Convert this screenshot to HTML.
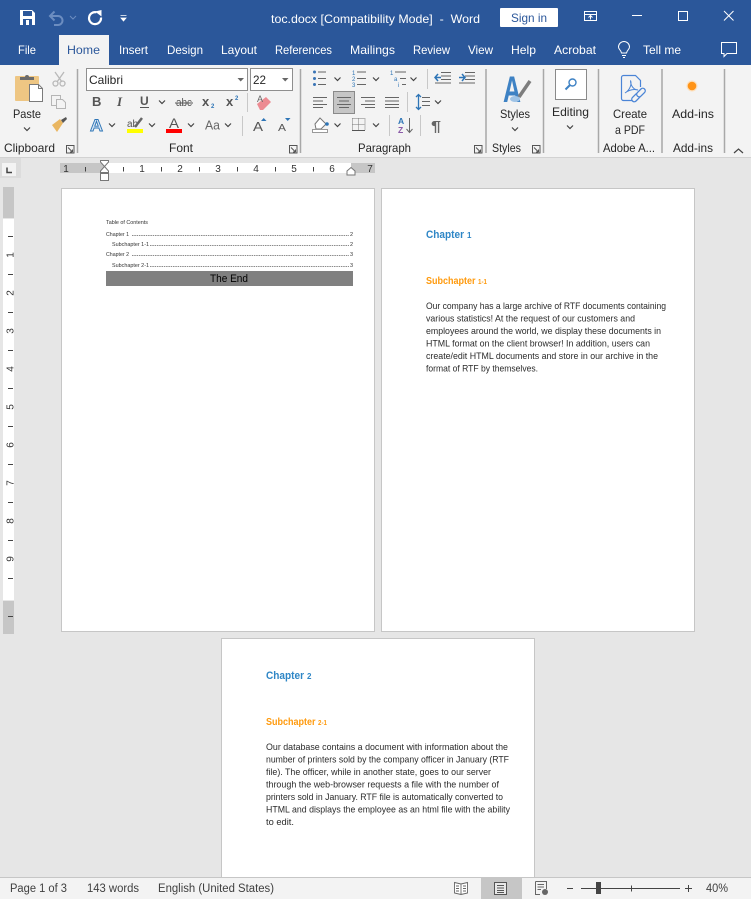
<!DOCTYPE html>
<html lang="en"><head><meta charset="utf-8"><title>toc.docx - Word</title>
<style>
html,body{margin:0;padding:0;width:751px;height:899px;overflow:hidden;background:#e6e6e6}
svg{display:block}
text{font-family:"Liberation Sans",sans-serif;white-space:pre}
.t{font-size:12px;fill:#fff}
.r{font-size:12px;fill:#262626}
.n{font-size:10px;fill:#333}
.b{font-size:9.5px;fill:#2b2b2b}
.toc{font-size:5.5px;fill:#333}
.h1{font-size:11px;font-weight:bold;fill:#2e86c6}
.h2{font-size:10.5px;font-weight:bold;fill:#ff9a0d}
.s{font-size:11.5px;fill:#404040}
.c{fill:none;stroke:#444;stroke-width:1.2}
.g{stroke:#666;stroke-width:1;fill:none}
.sep{stroke:#a8a8a8;stroke-width:1.5}
.sep2{stroke:#c8c8c8;stroke-width:1}
</style></head><body>
<svg width="751" height="899" viewBox="0 0 751 899" xmlns="http://www.w3.org/2000/svg">
<defs>
<path id="ch" class="c" d="M-3-1.5 0 1.5 3-1.5"/>
<path id="ln" d="M2 2.5 6.5 7M6.5 7V4.500M6.500 7H4M.5.5H8V8H.5Z" fill="none" stroke="#555"/>
</defs>
<!-- title bar -->
<rect width="751" height="65" fill="#2b579a"/>
<path d="M20 10H32L35 13V25H20Z" fill="#fff"/><rect x="23" y="11" width="9" height="5" fill="#2b579a"/><rect x="23" y="19" width="9" height="6" fill="#2b579a"/><rect x="26" y="20" width="3" height="5" fill="#fff"/>
<path d="M50.500 16H58A4.500 4.500 0 0 1 58 25H54M54.500 11.500 50 16 54.500 20.500" fill="none" stroke="#6c8dc0" stroke-width="2"/>
<path d="M70 16 73 19 76 16" fill="none" stroke="#6c8dc0"/>
<path d="M96.500 12.300A6 6 0 1 0 101 17.500" fill="none" stroke="#fff" stroke-width="2.200"/>
<path d="M95 11.500 101.500 10V16.500Z" fill="#fff"/>
<path d="M120.500 15.500H126.500M121 18H126L123.500 21Z" fill="#fff" stroke="#fff" stroke-width=".8"/>
<text x="271" y="23" class="t" textLength="209" lengthAdjust="spacingAndGlyphs">toc.docx [Compatibility Mode]  -  Word</text>
<rect x="500" y="8" width="58" height="19" rx="1" fill="#fff"/>
<text x="511" y="22" class="t" style="fill:#2b579a" textLength="36" lengthAdjust="spacingAndGlyphs">Sign in</text>
<path d="M584.500 11.500H596.500V20.500H584.500ZM584.500 14.500H596.500M590.500 19.500V16M588.500 17.500 590.500 15.500 592.500 17.500" fill="none" stroke="#fff"/>
<path d="M632 15.500H642" stroke="#fff"/>
<rect x="678.500" y="11.500" width="9" height="9" fill="none" stroke="#fff"/>
<path d="M724 11 733.500 20.500M733.500 11 724 20.500" stroke="#fff"/>
<!-- tabs -->
<rect x="59" y="35" width="50" height="30" fill="#f3f3f3"/>
<text x="18" y="54" class="t" textLength="18" lengthAdjust="spacingAndGlyphs">File</text>
<text x="67" y="54" class="t" style="fill:#2b579a" textLength="33" lengthAdjust="spacingAndGlyphs">Home</text>
<text x="119" y="54" class="t" textLength="29" lengthAdjust="spacingAndGlyphs">Insert</text>
<text x="167" y="54" class="t" textLength="36" lengthAdjust="spacingAndGlyphs">Design</text>
<text x="221" y="54" class="t" textLength="36" lengthAdjust="spacingAndGlyphs">Layout</text>
<text x="275" y="54" class="t" textLength="57" lengthAdjust="spacingAndGlyphs">References</text>
<text x="350" y="54" class="t" textLength="45" lengthAdjust="spacingAndGlyphs">Mailings</text>
<text x="413" y="54" class="t" textLength="37" lengthAdjust="spacingAndGlyphs">Review</text>
<text x="468" y="54" class="t" textLength="25" lengthAdjust="spacingAndGlyphs">View</text>
<text x="511" y="54" class="t" textLength="25" lengthAdjust="spacingAndGlyphs">Help</text>
<text x="554" y="54" class="t" textLength="42" lengthAdjust="spacingAndGlyphs">Acrobat</text>
<path d="M621.500 53C621 50 618.500 49.500 618.500 47A5.500 5.500 0 0 1 629.500 47C629.500 49.500 627 50 626.500 53ZM622 55.500H626M623 57.500H625" fill="none" stroke="#fff"/>
<text x="643" y="54" class="t" textLength="38" lengthAdjust="spacingAndGlyphs">Tell me</text>
<path d="M721.500 42.500H736.500V53.500H727L724 56.500V53.500H721.500Z" fill="none" stroke="#fff"/>
<!-- ribbon -->
<rect y="65" width="751" height="92" fill="#f3f3f3"/>
<rect y="157" width="751" height="1" fill="#d2d2d2"/>
<g class="sep"><path d="M77.500 69V153M300.500 69V153M486 69V153M543.500 69V153M598.500 69V153M662 69V153M724.500 69V153"/></g>
<!-- clipboard -->
<rect x="15" y="76" width="24" height="25" rx="1" fill="#eec683"/>
<path d="M20 80V77H25A2 2 0 0 1 29 77H34V80Z" fill="#6b6b6b"/>
<path d="M29.500 84.500H38.500L42.500 88.500V101.500H29.500Z" fill="#fff" stroke="#7a7a7a"/>
<path d="M38.500 84.500V88.500H42.500" fill="none" stroke="#7a7a7a"/>
<text x="13" y="118" class="r" textLength="28" lengthAdjust="spacingAndGlyphs">Paste</text>
<use href="#ch" x="27" y="129"/>
<g fill="none" stroke="#b9b9b9" stroke-width="1.300"><path d="M55 72 62 82M64 72 57 82"/><circle cx="55.500" cy="83.500" r="2.500"/><circle cx="62.500" cy="83.500" r="2.500"/></g>
<g fill="#f3f3f3" stroke="#b5b5b5"><path d="M51.500 95.500H60.500V105.500H51.500Z"/><path d="M56.500 99.500H62.500L65.500 102.500V108.500H56.500Z"/></g>
<path d="M52 125 60 119 63 123 57 132Z" fill="#e9b661"/><path d="M61 120 66 117 67 119 63 123Z" fill="#555"/>
<text x="4" y="152" class="r" textLength="51" lengthAdjust="spacingAndGlyphs">Clipboard</text>
<use href="#ln" x="66" y="145"/>
<!-- font -->
<rect x="86.500" y="68.500" width="161" height="22" fill="#fff" stroke="#8f8f8f"/>
<text x="89" y="84" class="r" textLength="34" lengthAdjust="spacingAndGlyphs">Calibri</text>
<path d="M237.500 78H244L240.700 81.500Z" fill="#666"/>
<rect x="250.500" y="68.500" width="42" height="22" fill="#fff" stroke="#8f8f8f"/>
<text x="253" y="84" class="r" textLength="13" lengthAdjust="spacingAndGlyphs">22</text>
<path d="M282 78H288.500L285.200 81.500Z" fill="#666"/>
<text x="92" y="106" style="font-size:13px;font-weight:bold;fill:#555">B</text>
<text x="117" y="106" style="font-size:13px;font-style:italic;font-weight:bold;fill:#555;font-family:'Liberation Serif',serif">I</text>
<text x="140" y="105" style="font-size:12px;font-weight:bold;fill:#555">U</text><path d="M140 107.500H149" stroke="#555"/>
<use href="#ch" x="162" y="102"/>
<text x="176" y="106" style="font-size:11px;fill:#555" textLength="16" lengthAdjust="spacingAndGlyphs">abc</text><path d="M175 103H193" stroke="#555"/>
<text x="202" y="106" style="font-size:13px;font-weight:bold;fill:#555">x</text><text x="211" y="108" style="font-size:6px;font-weight:bold;fill:#2e75b6">2</text>
<text x="226" y="106" style="font-size:13px;font-weight:bold;fill:#555">x</text><text x="235" y="100" style="font-size:6px;font-weight:bold;fill:#2e75b6">2</text>
<path class="sep2" d="M247.500 93V112"/>
<path d="M257 104 266 97 271 102 263 110H260Z" fill="#ec8b92"/><text x="257" y="102" style="font-size:9px;fill:#666">A</text>
<text x="90" y="131" style="font-size:17px;font-weight:bold;fill:#dbe8f6;stroke:#2e75b6;stroke-width:.9" textLength="13" lengthAdjust="spacingAndGlyphs">A</text>
<use href="#ch" x="112" y="125"/>
<text x="127" y="127" style="font-size:10px;fill:#555">ab</text><path d="M135 127 142 118" stroke="#666" stroke-width="2.500"/>
<rect x="127" y="129" width="16" height="4" fill="#ff0"/>
<use href="#ch" x="152" y="125"/>
<text x="169" y="128" style="font-size:14px;fill:#555" textLength="10" lengthAdjust="spacingAndGlyphs">A</text>
<rect x="166" y="129" width="16" height="4" fill="#f00"/>
<use href="#ch" x="191" y="125"/>
<text x="205" y="129.500" style="font-size:13px;fill:#666" textLength="15" lengthAdjust="spacingAndGlyphs">Aa</text>
<use href="#ch" x="228" y="125"/>
<path class="sep2" d="M242.500 116V136"/>
<text x="253" y="131" style="font-size:13px;fill:#555" textLength="10" lengthAdjust="spacingAndGlyphs">A</text><path d="M261 121H266.500L263.700 118Z" fill="#2e75b6"/>
<text x="278" y="131" style="font-size:10.500px;fill:#555" textLength="8" lengthAdjust="spacingAndGlyphs">A</text><path d="M285 118H290.500L287.700 121Z" fill="#2e75b6"/>
<text x="169" y="152" class="r" textLength="24" lengthAdjust="spacingAndGlyphs">Font</text>
<use href="#ln" x="289" y="145"/>
<!-- paragraph row 1 -->
<g fill="#3a74b5"><circle cx="314.500" cy="72" r="1.500"/><circle cx="314.500" cy="78.500" r="1.500"/><circle cx="314.500" cy="84.500" r="1.500"/></g>
<path class="g" d="M318 72H326M318 78.500H326M318 84.500H326"/>
<use href="#ch" x="337.500" y="79"/>
<text x="352" y="75" style="font-size:6px;fill:#2e75b6">1</text><text x="352" y="81" style="font-size:6px;fill:#2e75b6">2</text><text x="352" y="87" style="font-size:6px;fill:#2e75b6">3</text>
<path class="g" d="M357 72H366M357 78.500H366M357 84.500H366"/>
<use href="#ch" x="376" y="79"/>
<text x="390" y="75" style="font-size:6px;fill:#2e75b6">1</text><text x="394" y="81" style="font-size:6px;fill:#2e75b6">a</text><text x="398" y="87" style="font-size:6px;fill:#2e75b6">i</text>
<path class="g" d="M395 72H406M400 78.500H406M402 84.500H406"/>
<use href="#ch" x="413.500" y="79"/>
<path class="sep2" d="M427.500 69V89"/>
<path class="g" d="M441 72.500H451M441 76H451M441 79.500H451M435 83H451"/><path d="M435 77.500H441M438 74 435 77.500 438 81" fill="none" stroke="#2e75b6" stroke-width="1.500"/>
<path class="g" d="M465 72.500H475M465 76H475M465 79.500H475M459 83H475"/><path d="M459 77.500H465M462 74 465 77.500 462 81" fill="none" stroke="#2e75b6" stroke-width="1.500"/>
<!-- row 2 -->
<path class="g" d="M313 97.500H327M313 101H323M313 104.500H327M313 107.500H323"/>
<rect x="333.500" y="91.500" width="21" height="22" fill="#c6c6c6" stroke="#8a8a8a"/>
<path class="g" d="M337 97.500H351M339 101H349M337 104.500H351M339 107.500H349"/>
<path class="g" d="M361 97.500H375M365 101H375M361 104.500H375M365 107.500H375"/>
<path class="g" d="M385 97.500H399M385 101H399M385 104.500H399M385 107.500H399"/>
<path class="sep2" d="M407.500 92V112"/>
<path class="g" d="M422 97.500H430M422 101.500H430M422 105.500H430"/>
<path d="M418.500 95V109M416 97 418.500 94.500 421 97M416 107 418.500 109.500 421 107" fill="none" stroke="#2e75b6" stroke-width="1.300"/>
<use href="#ch" x="438" y="102"/>
<!-- row 3 -->
<path d="M315 124 320 118 326 124 321 129H316Z" fill="#fff" stroke="#777"/><circle cx="327" cy="124" r="1.800" fill="#2e75b6"/>
<rect x="312.500" y="129.500" width="15" height="3" fill="#fff" stroke="#999"/>
<use href="#ch" x="337.500" y="125"/>
<path d="M352.500 118.500H365M352.500 124.500H365M358.500 118.500V130M352.500 118.500V130M365 118.500V130" stroke="#777" stroke-dasharray="1 1" fill="none"/><path d="M352 130.500H365" stroke="#555"/>
<use href="#ch" x="376" y="125"/>
<path class="sep2" d="M389.500 115V136"/>
<text x="398" y="124" style="font-size:8.500px;font-weight:bold;fill:#2e75b6">A</text>
<text x="398" y="133" style="font-size:8.500px;font-weight:bold;fill:#8a5aa8">Z</text>
<path d="M409.500 118V132M406.500 129 409.500 132.500 412.500 129" fill="none" stroke="#666"/>
<path class="sep2" d="M420.500 115V136"/>
<text x="431" y="131" style="font-size:15px;font-weight:bold;fill:#666" textLength="10" lengthAdjust="spacingAndGlyphs">¶</text>
<text x="358" y="152" class="r" textLength="53" lengthAdjust="spacingAndGlyphs">Paragraph</text>
<use href="#ln" x="474" y="145"/>
<!-- styles -->
<text x="503" y="102" style="font-size:37px;font-weight:bold;fill:#3e82c4" textLength="18" lengthAdjust="spacingAndGlyphs">A</text>
<path d="M519 97 530 81" stroke="#7d7d7d" stroke-width="3.500"/>
<ellipse cx="515" cy="99" rx="5" ry="3" fill="#9fc3e5"/>
<text x="500" y="118" class="r" textLength="30" lengthAdjust="spacingAndGlyphs">Styles</text>
<use href="#ch" x="515" y="129"/>
<text x="492" y="152" class="r" textLength="29" lengthAdjust="spacingAndGlyphs">Styles</text>
<use href="#ln" x="532" y="145"/>
<!-- editing -->
<rect x="555.500" y="69.500" width="31" height="30" fill="#fff" stroke="#8a8a8a"/>
<circle cx="572.500" cy="82.500" r="3.500" fill="none" stroke="#3e82c4" stroke-width="1.400"/>
<path d="M570 85 565.500 89.500" stroke="#3e82c4" stroke-width="2"/>
<text x="552" y="116" class="r" textLength="37" lengthAdjust="spacingAndGlyphs">Editing</text>
<use href="#ch" x="570" y="127"/>
<!-- pdf -->
<path d="M632 100.500H623.500A2 2 0 0 1 621.500 98.500V77.500A2 2 0 0 1 623.500 75.500H635.500L640.500 80.500V87" fill="none" stroke="#4a84d6" stroke-width="1.200"/>
<path d="M625 93C630 90 632 84 630.500 80.500C630.500 86 634 90 638 90C634 89 629 90 625 93Z" fill="none" stroke="#4a84d6"/>
<g transform="rotate(-45 638.500 95)" fill="#f3f3f3" stroke="#4a84d6" stroke-width="1.300"><rect x="630" y="92.500" width="10" height="5" rx="2.500"/><rect x="637" y="92.500" width="10" height="5" rx="2.500"/></g>
<text x="613" y="118" class="r" textLength="34" lengthAdjust="spacingAndGlyphs">Create</text>
<text x="615" y="134" class="r" textLength="30" lengthAdjust="spacingAndGlyphs">a PDF</text>
<text x="603" y="152" class="r" textLength="52" lengthAdjust="spacingAndGlyphs">Adobe A...</text>
<!-- addins -->
<circle cx="692" cy="86" r="5.500" fill="#fde0bd"/><circle cx="692" cy="86" r="4.300" fill="#ff9316"/>
<text x="672" y="118" class="r" textLength="42" lengthAdjust="spacingAndGlyphs">Add-ins</text>
<text x="673" y="152" class="r" textLength="40" lengthAdjust="spacingAndGlyphs">Add-ins</text>
<path d="M734 153 738.500 149 743 153" fill="none" stroke="#444" stroke-width="1.200"/>
<!-- tab selector -->
<rect y="158" width="21" height="20" fill="#dcdcdc"/>
<rect x="2" y="163" width="14" height="13" fill="#f3f3f3"/>
<path d="M7 167.500V172.500H12" fill="none" stroke="#444" stroke-width="1.500"/>
<!-- h ruler -->
<rect x="60" y="163" width="44" height="10" fill="#c6c6c6"/>
<rect x="104" y="163" width="247" height="10" fill="#fff"/>
<rect x="351" y="163" width="24" height="10" fill="#c6c6c6"/>
<path stroke="#444" d="M85.500 167V171.500M123.500 167V171.500M161.500 167V171.500M199.500 167V171.500M237.500 167V171.500M275.500 167V171.500M313.500 167V171.500"/>
<g class="n" text-anchor="middle"><text x="66" y="172">1</text><text x="142" y="172">1</text><text x="180" y="172">2</text><text x="218" y="172">3</text><text x="256" y="172">4</text><text x="294" y="172">5</text><text x="332" y="172">6</text><text x="370" y="172">7</text></g>
<path d="M100.500 160.500H108.500V162L104.500 166.500 100.500 162ZM104.500 166.500 108.500 171V172.500H100.500V171Z" fill="#fff" stroke="#777"/>
<rect x="100.500" y="173.500" width="8" height="7" fill="#fff" stroke="#777"/>
<path d="M351 167.500 355 171V175H347V171Z" fill="#fff" stroke="#777"/>
<!-- v ruler -->
<rect x="3" y="187" width="11" height="31" fill="#c6c6c6"/>
<rect x="3" y="219" width="11" height="381" fill="#fff"/>
<rect x="3" y="601" width="11" height="33" fill="#c6c6c6"/>
<path stroke="#444" d="M8 236.500H13M8 274.500H13M8 312.500H13M8 350.500H13M8 388.500H13M8 426.500H13M8 464.500H13M8 502.500H13M8 540.500H13M8 578.500H13M8 616.500H13"/>
<g class="n" text-anchor="middle">
<text transform="translate(13.500 255) rotate(-90)">1</text><text transform="translate(13.500 293) rotate(-90)">2</text><text transform="translate(13.500 331) rotate(-90)">3</text><text transform="translate(13.500 369) rotate(-90)">4</text><text transform="translate(13.500 407) rotate(-90)">5</text><text transform="translate(13.500 445) rotate(-90)">6</text><text transform="translate(13.500 483) rotate(-90)">7</text><text transform="translate(13.500 521) rotate(-90)">8</text><text transform="translate(13.500 559) rotate(-90)">9</text>
</g>
<!-- page 1 -->
<rect x="61.500" y="188.500" width="313" height="443" fill="#fff" stroke="#c6c6c6"/>
<text x="106" y="224" class="toc" textLength="42" lengthAdjust="spacingAndGlyphs">Table of Contents</text>
<text x="106" y="236" class="toc" textLength="23" lengthAdjust="spacingAndGlyphs">Chapter 1</text>
<text x="112" y="246" class="toc" textLength="37" lengthAdjust="spacingAndGlyphs">Subchapter 1-1</text>
<text x="106" y="256" class="toc" textLength="23" lengthAdjust="spacingAndGlyphs">Chapter 2</text>
<text x="112" y="267" class="toc" textLength="37" lengthAdjust="spacingAndGlyphs">Subchapter 2-1</text>
<path d="M132 235.500H349M150 245.500H349M132 255.500H349M150 266.500H349" stroke="#666" stroke-width=".8" stroke-dasharray="1.500 .8"/>
<text x="350" y="236" class="toc">2</text><text x="350" y="246" class="toc">2</text><text x="350" y="256" class="toc">3</text><text x="350" y="267" class="toc">3</text>
<rect x="106" y="271" width="247" height="15" fill="#808080"/>
<text x="210" y="282" style="font-size:11px;fill:#000" textLength="38" lengthAdjust="spacingAndGlyphs">The End</text>
<!-- page 2 -->
<rect x="381.500" y="188.500" width="313" height="443" fill="#fff" stroke="#c6c6c6"/>
<text x="426" y="238" class="h1" textLength="38" lengthAdjust="spacingAndGlyphs">Chapter</text><text x="467" y="238" class="h1" style="font-size:8px">1</text>
<text x="426" y="284" class="h2" textLength="49.500" lengthAdjust="spacingAndGlyphs">Subchapter</text><text x="478" y="284" class="h2" style="font-size:7px" textLength="9" lengthAdjust="spacingAndGlyphs">1-1</text>
<text x="426" y="309" class="b" textLength="240" lengthAdjust="spacingAndGlyphs">Our company has a large archive of RTF documents containing</text>
<text x="426" y="321.500" class="b" textLength="209" lengthAdjust="spacingAndGlyphs">various statistics! At the request of our customers and</text>
<text x="426" y="334" class="b" textLength="235" lengthAdjust="spacingAndGlyphs">employees around the world, we display these documents in</text>
<text x="426" y="346.500" class="b" textLength="224" lengthAdjust="spacingAndGlyphs">HTML format on the client browser! In addition, users can</text>
<text x="426" y="359" class="b" textLength="232" lengthAdjust="spacingAndGlyphs">create/edit HTML documents and store in our archive in the</text>
<text x="426" y="371.500" class="b" textLength="112" lengthAdjust="spacingAndGlyphs">format of RTF by themselves.</text>
<!-- page 3 -->
<rect x="221.500" y="638.500" width="313" height="270" fill="#fff" stroke="#c6c6c6"/>
<text x="266" y="679" class="h1" textLength="38" lengthAdjust="spacingAndGlyphs">Chapter</text><text x="307" y="679" class="h1" style="font-size:8px">2</text>
<text x="266" y="725" class="h2" textLength="49.500" lengthAdjust="spacingAndGlyphs">Subchapter</text><text x="318" y="725" class="h2" style="font-size:7px" textLength="9" lengthAdjust="spacingAndGlyphs">2-1</text>
<text x="266" y="750" class="b" textLength="242" lengthAdjust="spacingAndGlyphs">Our database contains a document with information about the</text>
<text x="266" y="762.500" class="b" textLength="243" lengthAdjust="spacingAndGlyphs">number of printers sold by the company officer in January (RTF</text>
<text x="266" y="775" class="b" textLength="225" lengthAdjust="spacingAndGlyphs">file). The officer, while in another state, goes to our server</text>
<text x="266" y="787.500" class="b" textLength="233" lengthAdjust="spacingAndGlyphs">through the web-browser requests a file with the number of</text>
<text x="266" y="800" class="b" textLength="237" lengthAdjust="spacingAndGlyphs">printers sold in January. RTF file is automatically converted to</text>
<text x="266" y="812.500" class="b" textLength="244" lengthAdjust="spacingAndGlyphs">HTML and displays the employee as an html file with the ability</text>
<text x="266" y="825" class="b" textLength="28" lengthAdjust="spacingAndGlyphs">to edit.</text>
<!-- status -->
<rect y="878" width="751" height="21" fill="#f3f3f3"/>
<rect y="877" width="751" height="1" fill="#c6c6c6"/>
<text x="10" y="892" class="s" textLength="57" lengthAdjust="spacingAndGlyphs">Page 1 of 3</text>
<text x="87" y="892" class="s" textLength="52" lengthAdjust="spacingAndGlyphs">143 words</text>
<text x="158" y="892" class="s" textLength="116" lengthAdjust="spacingAndGlyphs">English (United States)</text>
<path d="M454.500 882.500 461 884 467.500 882.500V893L461 894.500 454.500 893ZM461 884V894M456 886H459M456 888.500H459M456 891H459M463 886H466M463 888.500H466M463 891H466" fill="#fff" stroke="#666" stroke-width=".9"/>
<rect x="481" y="878" width="41" height="21" fill="#c6c6c6"/>
<rect x="494.500" y="882.500" width="12" height="12" fill="#e8e8e8" stroke="#555"/>
<path d="M497 885.500H504M497 888H504M497 890.500H504M497 892.500H504" stroke="#555"/>
<path d="M535.500 881.500H546.500V889M540 894.500H535.500V881.500M537.500 884.500H544M537.500 887H544M537.500 889.500H541" fill="none" stroke="#666"/><circle cx="545" cy="892" r="3" fill="#666"/>
<path d="M567 888.500H573" stroke="#444"/>
<path d="M581 888.500H680" stroke="#444"/>
<path d="M631.500 885.500V891.500" stroke="#444"/>
<rect x="596" y="882" width="5" height="12" fill="#444"/>
<path d="M685 888.500H692M688.500 885V892" stroke="#444"/>
<text x="706" y="892" class="s" textLength="22" lengthAdjust="spacingAndGlyphs">40%</text>
</svg>
</body></html>
